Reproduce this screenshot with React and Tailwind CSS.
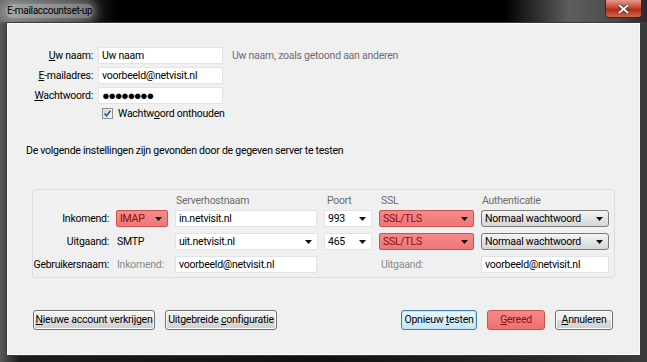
import React from "react";

const font = { fontFamily: "Roboto, 'Noto Sans', sans-serif" };

function Arrow({ className = "" }) {
  return (
    <svg width="7" height="4" viewBox="0 0 7 4" className={className}>
      <path d="M0 0h7L3.5 4z" fill="#111" />
    </svg>
  );
}

function U({ children }) {
  return <span className="underline underline-offset-1">{children}</span>;
}

function TextInput({ value, className = "" }) {
  return (
    <div className={`flex h-[17px] items-center whitespace-nowrap border border-[#e2e3ea] bg-white px-[3px] text-black ${className}`}>
      {value}
    </div>
  );
}

function Select({ value, red, gray, className = "" }) {
  const look = red
    ? "border-[#c95353] bg-[linear-gradient(#f58a8a,#ee7676)] text-[#8e0c0c] rounded-[2px]"
    : gray
    ? "border-[#7a7a7a] bg-[linear-gradient(#f5f5f5,#e4e4e4_50%,#d6d6d6)] text-black rounded-[3px]"
    : "border-[#e2e3ea] bg-white text-black";
  return (
    <div className={`flex h-[17px] items-center justify-between whitespace-nowrap border px-[3px] ${look} ${className}`}>
      <span>{value}</span>
      <Arrow className="mr-[2px]" />
    </div>
  );
}

function Button({ children, variant, className = "" }) {
  const look =
    variant === "red"
      ? "border-[#c95353] bg-[linear-gradient(#f58a8a,#ee7070)] text-[#8e0c0c]"
      : variant === "focus"
      ? "border-[#3c7fb1] bg-[linear-gradient(#eaf6fd,#d9f0fc_50%,#bee6fd)] shadow-[inset_0_0_0_1px_#c4e5f6]"
      : "border-[#707070] bg-[linear-gradient(#f2f2f2,#ebebeb_50%,#dddddd_51%,#cfcfcf)] shadow-[inset_0_0_0_1px_#fcfcfc]";
  return (
    <div className={`flex h-[20px] items-center justify-center whitespace-nowrap rounded-[3px] border ${look} ${className}`}>
      {children}
    </div>
  );
}

export default function App() {
  return (
    <div
      style={font}
      className="flex h-[362px] w-[647px] flex-col bg-[linear-gradient(90deg,#5a5a5a,#1c1c1c_3%,#111_50%,#2a2a2a_85%,#3c3c3c)] text-[10.5px] tracking-[-0.25px] text-black"
    >
      {/* title bar */}
      <div className="flex h-[22px] items-start justify-between bg-[linear-gradient(90deg,#6e6e6e_0%,#3a3a3a_11%,#000_18%,#000_78%,#5e5e5e_88%,#4a4a4a_95%,#2a2a2a)]">
        <span className="ml-[6px] mt-[4px] rounded-[6px] bg-[#ffffff66] px-[1px] text-[10px] leading-[14px] tracking-[-0.3px] text-black shadow-[0_0_8px_4px_#ffffff50]">
          E-mailaccountset-up
        </span>
        <div className="mr-[5px] flex h-[18px] w-[37px] items-center justify-center rounded-b-[4px] border border-t-0 border-[#5a1a14] bg-[linear-gradient(#e89a8a,#c8452f_45%,#b32a15_55%,#d2654d)]">
          <svg width="11" height="10" viewBox="0 0 11 10">
            <path d="M1.5 1.5l8 7M9.5 1.5l-8 7" stroke="#3a3a3a" strokeWidth="3.2" strokeLinecap="square" />
            <path d="M1.5 1.5l8 7M9.5 1.5l-8 7" stroke="#fff" strokeWidth="1.8" strokeLinecap="square" />
          </svg>
        </div>
      </div>

      {/* client area */}
      <div className="mx-[6px] mb-[6px] flex flex-1 flex-col border border-[#3a3a3a] bg-[#f0f0f0] shadow-[inset_0_0_0_1px_#fbfbfb]">
        {/* account fields */}
        <div className="mt-[24px] flex flex-col gap-[3px] pl-[1px]">
          <div className="flex items-center">
            <label className="w-[85px] text-right"><U>U</U>w naam:</label>
            <TextInput value="Uw naam" className="ml-[5px] w-[125px]" />
            <span className="ml-[9px] text-[#6d6d6d]">Uw naam, zoals getoond aan anderen</span>
          </div>
          <div className="flex items-center">
            <label className="w-[85px] text-right"><U>E</U>-mailadres:</label>
            <TextInput value="voorbeeld@netvisit.nl" className="ml-[5px] w-[125px]" />
          </div>
          <div className="flex items-center">
            <label className="w-[85px] text-right"><U>W</U>achtwoord:</label>
            <TextInput value={<span className="text-[13px] leading-none tracking-[-1.5px]">●●●●●●●●</span>} className="ml-[5px] w-[125px]" />
          </div>
          <div className="-mt-[1px] ml-[94px] flex items-center gap-[5px]">
            <svg width="11" height="11" viewBox="0 0 11 11">
              <rect x="0.5" y="0.5" width="10" height="10" fill="#f4f4f4" stroke="#8e8f8f" />
              <rect x="1.5" y="1.5" width="8" height="8" fill="url(#cb)" />
              <defs>
                <linearGradient id="cb" x1="0" y1="0" x2="1" y2="1">
                  <stop offset="0" stopColor="#cbcfd5" />
                  <stop offset="1" stopColor="#f6f6f6" />
                </linearGradient>
              </defs>
              <path d="M2.5 5.5l2 2.3 4-5" stroke="#2b4f93" strokeWidth="1.4" fill="none" />
            </svg>
            <span>Wachtw<U>o</U>ord onthouden</span>
          </div>
        </div>

        <p className="ml-[19px] mt-[21px]">De volgende instellingen zijn gevonden door de gegeven server te testen</p>

        {/* server settings group */}
        <div className="ml-[25px] mt-[30px] w-[583px] rounded-[3px] border border-[#d5dfe5] pb-[4px] pt-[3px]">
          <div className="grid grid-cols-[76px_52px_142px_48px_95px_128px] items-center gap-x-[7px] gap-y-[6px]">
            <span />
            <span />
            <span className="pl-[1px] text-[#6d6d6d]">Serverhostnaam</span>
            <span className="pl-[3px] text-[#6d6d6d]">Poort</span>
            <span className="pl-[2px] text-[#6d6d6d]">SSL</span>
            <span className="pl-[1px] text-[#6d6d6d]">Authenticatie</span>

            <span className="-mt-[4px] text-right">Inkomend:</span>
            <Select value="IMAP" red className="-mt-[4px]" />
            <TextInput value="in.netvisit.nl" className="-mt-[4px]" />
            <Select value="993" className="-mt-[4px]" />
            <Select value="SSL/TLS" red className="-mt-[4px]" />
            <Select value="Normaal wachtwoord" gray className="-mt-[4px]" />

            <span className="text-right">Uitgaand:</span>
            <span className="pl-[1px]">SMTP</span>
            <Select value="uit.netvisit.nl" className="-mr-[1px]" />
            <Select value="465" />
            <Select value="SSL/TLS" red />
            <Select value="Normaal wachtwoord" gray />

            <span className="text-right">Gebruikersnaam:</span>
            <span className="pl-[1px] text-[#8a8a8a]">Inkomend:</span>
            <TextInput value="voorbeeld@netvisit.nl" />
            <span />
            <span className="pl-[2px] text-[#8a8a8a]">Uitgaand:</span>
            <TextInput value="voorbeeld@netvisit.nl" />
          </div>
        </div>

        {/* buttons */}
        <div className="mt-[32px] flex items-center justify-between pl-[26px] pr-[27px]">
          <div className="flex gap-[10px]">
            <Button className="w-[122px]"><span><U>N</U>ieuwe account verkrijgen</span></Button>
            <Button className="w-[112px]"><span>Uitgebreide <U>c</U>onfiguratie</span></Button>
          </div>
          <div className="flex gap-[10px]">
            <Button variant="focus" className="w-[76px]"><span>Opnieuw <U>t</U>esten</span></Button>
            <Button variant="red" className="w-[58px]"><span><U>G</U>ereed</span></Button>
            <Button className="w-[58px]"><span><U>A</U>nnuleren</span></Button>
          </div>
        </div>
      </div>
    </div>
  );
}
